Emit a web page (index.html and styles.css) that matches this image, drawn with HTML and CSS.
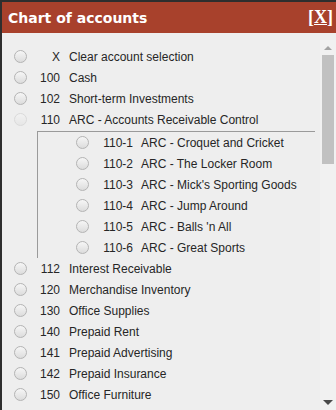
FILE: index.html
```html
<!DOCTYPE html>
<html lang="en">
<head>
    <meta charset="UTF-8">
    <meta name="viewport" content="width=device-width, initial-scale=1.0">
    <title>Chart of accounts</title>
    <link rel="stylesheet" href="styles.css">
</head>
<body>
    <div class="dialog">
        <div class="dialog-header">
            <span class="dialog-title">Chart of accounts</span>
            <a class="dialog-close">[<u>X</u>]</a>
        </div>
        <div class="dialog-body">
            <div class="account-list">
                <label class="row"><input type="radio" name="acct"><span class="code">X</span><span class="name">Clear account selection</span></label>
                <label class="row"><input type="radio" name="acct"><span class="code">100</span><span class="name">Cash</span></label>
                <label class="row"><input type="radio" name="acct"><span class="code">102</span><span class="name">Short-term Investments</span></label>
                <label class="row"><input type="radio" name="acct" disabled><span class="code">110</span><span class="name">ARC - Accounts Receivable Control</span></label>
                <div class="sub-group">
                    <label class="row sub"><input type="radio" name="acct"><span class="code">110-1</span><span class="name">ARC - Croquet and Cricket</span></label>
                    <label class="row sub"><input type="radio" name="acct"><span class="code">110-2</span><span class="name">ARC - The Locker Room</span></label>
                    <label class="row sub"><input type="radio" name="acct"><span class="code">110-3</span><span class="name">ARC - Mick's Sporting Goods</span></label>
                    <label class="row sub"><input type="radio" name="acct"><span class="code">110-4</span><span class="name">ARC - Jump Around</span></label>
                    <label class="row sub"><input type="radio" name="acct"><span class="code">110-5</span><span class="name">ARC - Balls 'n All</span></label>
                    <label class="row sub"><input type="radio" name="acct"><span class="code">110-6</span><span class="name">ARC - Great Sports</span></label>
                </div>
                <label class="row"><input type="radio" name="acct"><span class="code">112</span><span class="name">Interest Receivable</span></label>
                <label class="row"><input type="radio" name="acct"><span class="code">120</span><span class="name">Merchandise Inventory</span></label>
                <label class="row"><input type="radio" name="acct"><span class="code">130</span><span class="name">Office Supplies</span></label>
                <label class="row"><input type="radio" name="acct"><span class="code">140</span><span class="name">Prepaid Rent</span></label>
                <label class="row"><input type="radio" name="acct"><span class="code">141</span><span class="name">Prepaid Advertising</span></label>
                <label class="row"><input type="radio" name="acct"><span class="code">142</span><span class="name">Prepaid Insurance</span></label>
                <label class="row"><input type="radio" name="acct"><span class="code">150</span><span class="name">Office Furniture</span></label>
            </div>
            <div class="scrollbar">
                <div class="scroll-btn up"></div>
                <div class="scroll-track">
                    <div class="scroll-thumb"></div>
                </div>
                <div class="scroll-btn down"></div>
            </div>
        </div>
    </div>
</body>
</html>
```

FILE: styles.css
```css
html, body {
    margin: 0;
    padding: 0;
    height: 100%;
    overflow: hidden;
}
body {
    font-family: "Liberation Sans", Arial, sans-serif;
    font-size: 12px;
    color: #262626;
    background: #eeeeee;
}
.dialog {
    height: 100%;
    border-top: 2px solid #2e2e2e;
    border-left: 2px solid #2e2e2e;
    display: flex;
    flex-direction: column;
    box-sizing: border-box;
}
.dialog-header {
    height: 31px;
    flex: none;
    background: #a8412c;
    color: #ffffff;
    display: flex;
    align-items: center;
    justify-content: space-between;
    padding: 0 3px 0 6px;
}
.dialog-title {
    font-family: "DejaVu Sans", Verdana, sans-serif;
    font-weight: bold;
    font-size: 14px;
}
.dialog-close {
    font-family: "Liberation Serif", "Times New Roman", serif;
    font-weight: bold;
    font-size: 18px;
    cursor: pointer;
}
.dialog-body {
    flex: 1;
    min-height: 0;
    margin-top: 7px;
    display: flex;
}
.account-list {
    flex: 1;
    min-width: 0;
    overflow: hidden;
    padding-top: 6px;
}
.scrollbar {
    width: 16px;
    flex: none;
    background: #f1f1f1;
    display: flex;
    flex-direction: column;
}
.scroll-btn {
    height: 15px;
    flex: none;
    display: flex;
    align-items: center;
    justify-content: center;
}
.scroll-btn::before {
    content: "";
    border-left: 4px solid transparent;
    border-right: 4px solid transparent;
}
.scroll-btn.up::before {
    border-bottom: 4px solid #a3a3a3;
}
.scroll-btn.down::before {
    border-left-width: 5px;
    border-right-width: 5px;
    border-top: 5px solid #4a4a4a;
}
.scroll-track {
    flex: 1;
    padding: 0 2px;
}
.scroll-thumb {
    height: 109px;
    background: #c1c1c1;
}
.row {
    display: flex;
    align-items: center;
    height: 21px;
    padding-left: 12px;
    white-space: nowrap;
}
.row input {
    -webkit-appearance: none;
    appearance: none;
    width: 13px;
    height: 13px;
    margin: 0;
    flex: none;
    border-radius: 50%;
    border: 1px solid #b4b4b4;
    background: linear-gradient(#f6f6f6, #dcdcdc);
    box-sizing: border-box;
}
.row input:disabled {
    border-color: #dadada;
    background: linear-gradient(#f2f2f2, #e6e6e6);
}
.code {
    width: 33px;
    text-align: right;
    flex: none;
}
.name {
    margin-left: 9px;
}
.sub-group {
    margin: 1px 5px 0 35px;
    border-top: 1px solid #9a9a9a;
    border-left: 1px solid #9a9a9a;
}
.row.sub {
    padding-left: 38px;
}
.row.sub .code {
    width: 44px;
}
.row.sub .name {
    margin-left: 8px;
}
```
